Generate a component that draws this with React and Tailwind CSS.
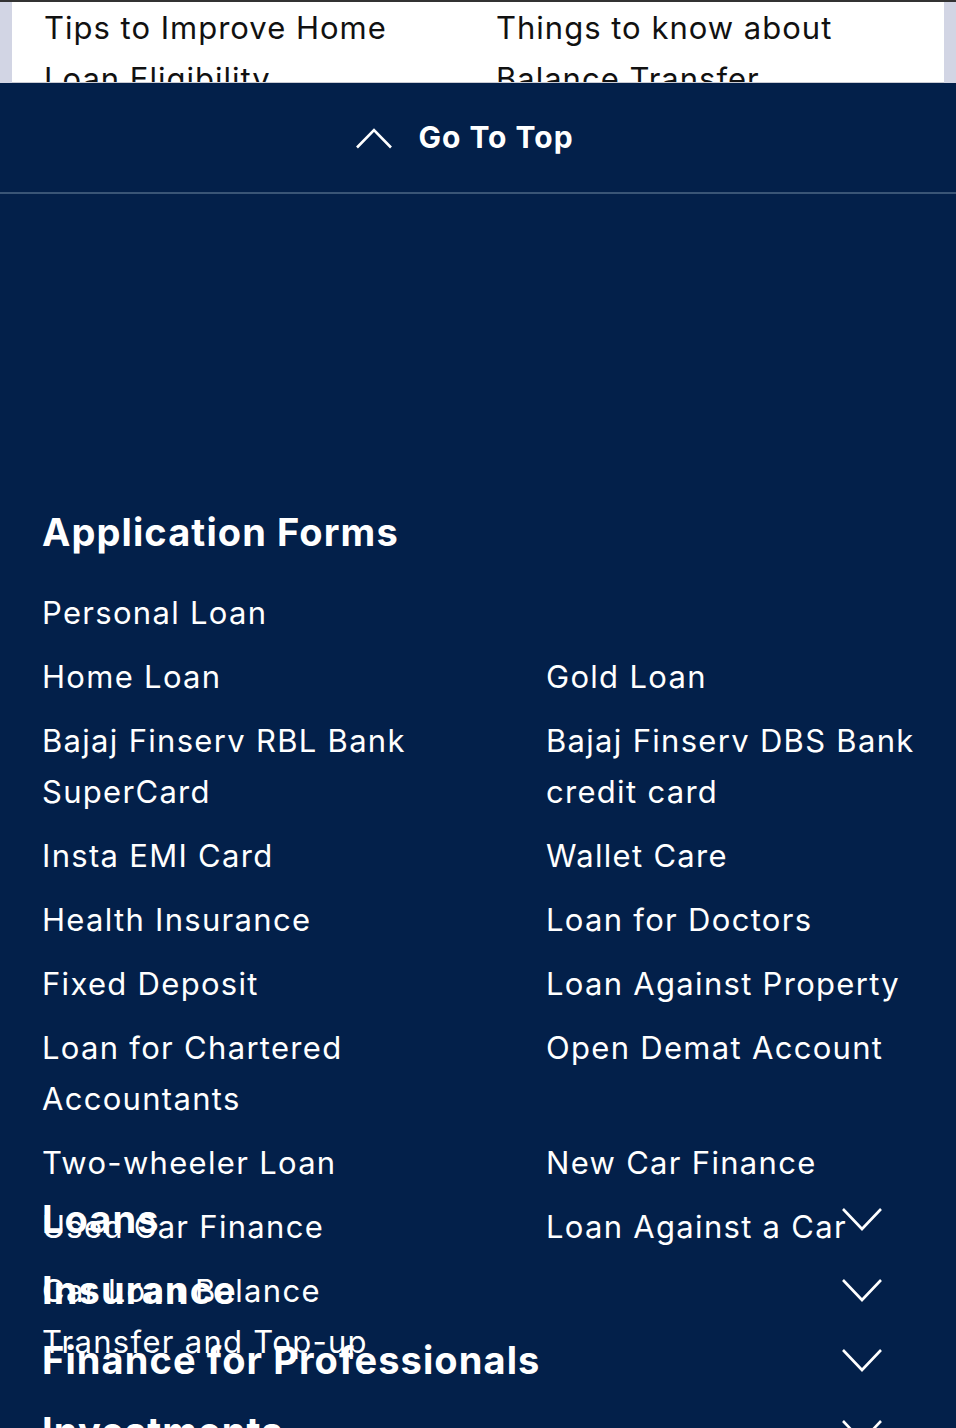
const formLinks = [
  ['Personal Loan', ''],
  ['Home Loan', 'Gold Loan'],
  ['Bajaj Finserv RBL Bank SuperCard', 'Bajaj Finserv DBS Bank credit card'],
  ['Insta EMI Card', 'Wallet Care'],
  ['Health Insurance', 'Loan for Doctors'],
  ['Fixed Deposit', 'Loan Against Property'],
  ['Loan for Chartered Accountants', 'Open Demat Account'],
  ['Two-wheeler Loan', 'New Car Finance'],
  ['Used Car Finance', 'Loan Against a Car'],
  ['Car Loan Balance Transfer and Top-up', ''],
];

const sections = ['Loans', 'Insurance', 'Finance for Professionals', 'Investments'];

const App = () => {
  return (
    <div className="w-[956px] h-[1428px] overflow-hidden bg-[#03204a] font-['Inter',sans-serif]">
      <div className="h-[2px] bg-[#333333]" />
      <div className="bg-[#d2d5e4] px-[12px]">
        <div className="h-[81px] overflow-hidden bg-white border-b border-[#c9cbd4]">
          <div className="grid grid-cols-[400px_400px] gap-x-[52px] pl-[32px] text-[31px] leading-[51px] tracking-[1px] text-[#111111]">
            <a>Tips to Improve Home Loan Eligibility</a>
            <a>Things to know about Balance Transfer</a>
          </div>
        </div>
      </div>

      <button className="flex w-full h-[111px] items-center justify-center gap-[26px] pr-[26px] border-b-2 border-[#3a5576] text-white">
        <svg className="w-[36px] h-[22px]" viewBox="0 0 36 22" fill="none" stroke="currentColor" strokeWidth="2.6">
          <polyline points="1,20.5 18,3 35,20.5" />
        </svg>
        <span className="text-[30px] font-bold tracking-[1px]">Go To Top</span>
      </button>

      <div className="h-[990px] pt-[316px] px-[42px]">
        <h3 className="text-[38px] leading-[44px] font-bold tracking-[1.1px] text-white">Application Forms</h3>
        <ul className="mt-[33px] grid grid-cols-[390px_390px] gap-x-[114px] gap-y-[13px] text-[31px] leading-[51px] tracking-[1.3px] text-white">
          {formLinks.map(([left, right]) => (
            <li key={left} className="contents">
              <a>{left}</a>
              <a>{right}</a>
            </li>
          ))}
        </ul>
      </div>

      <div>
        {sections.map((title) => (
          <div
            key={title}
            className="flex h-[70.5px] items-center justify-between pl-[42px] pr-[74px] text-white"
          >
            <span className="text-[38px] leading-[42px] font-bold tracking-[1.1px]">{title}</span>
            <svg className="w-[40px] h-[24px]" viewBox="0 0 40 24" fill="none" stroke="currentColor" strokeWidth="2.6">
              <polyline points="1,2 20,22 39,2" />
            </svg>
          </div>
        ))}
      </div>
    </div>
  );
};

export default App;
